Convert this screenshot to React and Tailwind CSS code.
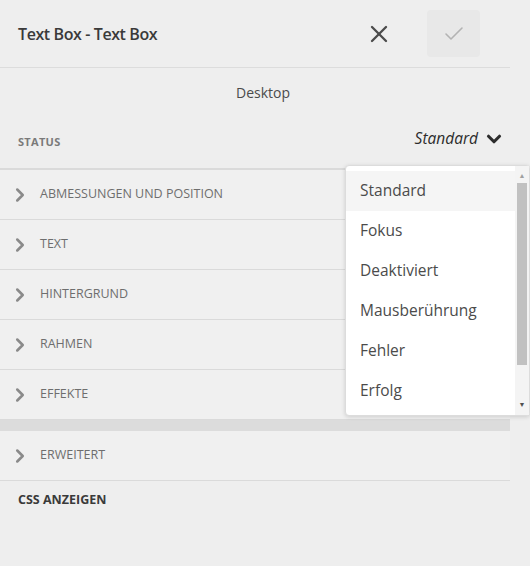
import { X, Check, ChevronRight, ChevronDown } from 'lucide-react'

const SECTIONS = ['Abmessungen und Position', 'Text', 'Hintergrund', 'Rahmen', 'Effekte']
const STATES = ['Standard', 'Fokus', 'Deaktiviert', 'Mausberührung', 'Fehler', 'Erfolg']

function SectionRow({ label }) {
  return (
    <div className="h-[50px] flex items-center border-b border-[#dadada] bg-[#f0f0f0] pl-[9px]">
      <ChevronRight size={22} strokeWidth={2.8} className="text-[#8a8a8a]" />
      <span className="ml-[9px] text-[12.5px] uppercase text-[#6e6e6e]">{label}</span>
    </div>
  )
}

export default function App() {
  return (
    <div className="relative w-[530px] h-[566px] bg-[#eeeeee] overflow-hidden font-['Open_Sans',sans-serif] text-[#323232]">
      <div className="w-[510px]">
        {/* Header */}
        <div className="h-[68px] flex items-center border-b border-[#dcdcdc] pl-[18px] pr-[30px]">
          <h2 className="flex-1 text-[16px] font-semibold tracking-[-0.4px] text-[#3a3a3a]">Text Box - Text Box</h2>
          <button className="w-[48px] h-[48px] flex items-center justify-center text-[#4b4b4b] mr-[24px]">
            <X size={28} strokeWidth={2} />
          </button>
          <button className="w-[53px] h-[47px] rounded-[4px] bg-[#e8e8e8] flex items-center justify-center text-[#b3b3b3]">
            <Check size={24} strokeWidth={1.6} />
          </button>
        </div>

        <div className="h-[48px] flex items-center justify-center pl-[16px] text-[14px] text-[#4b4b4b]">Desktop</div>

        {/* Status */}
        <div className="h-[54px] flex items-center justify-between border-b-2 border-[#dadada] pl-[18px] pr-[5px]">
          <span className="text-[11px] font-bold tracking-[0.3px] text-[#7a7a7a]">STATUS</span>
          <div className="flex items-center gap-[5px] -mt-[7px]">
            <span className="text-[15.5px] italic text-[#2c2c2c]">Standard</span>
            <ChevronDown size={22} strokeWidth={3.4} className="text-[#2c2c2c]" />
          </div>
        </div>

        {SECTIONS.map(s => <SectionRow key={s} label={s} />)}

        <div className="h-[11px] bg-[#dcdcdc]" />

        <SectionRow label="Erweitert" />

        <div className="pl-[18px] pt-[10px] text-[12.5px] font-bold text-[#3a3a3a]">CSS ANZEIGEN</div>
      </div>

      {/* Dropdown */}
      <div className="absolute left-[345px] top-[165px] w-[185px] h-[251px] bg-white rounded-[4px] border border-[#dcdcdc] shadow-[0_1px_4px_rgba(0,0,0,0.15)] flex">
        <ul className="flex-1 pt-[5px]">
          {STATES.map((s, i) => (
            <li
              key={s}
              className={`h-[40px] flex items-center pl-[14px] text-[15.5px] text-[#4b4b4b] ${i === 0 ? 'bg-[#f5f5f5]' : ''}`}
            >
              {s}
            </li>
          ))}
        </ul>
        <div className="w-[14px] flex flex-col items-center py-[5px] bg-[#f4f4f4]">
          <div className="text-[7px] leading-[10px] text-[#a0a0a0]">▲</div>
          <div className="w-[10px] h-[182px] mt-[2px] bg-[#c1c1c1]" />
          <div className="flex-1" />
          <div className="text-[7px] leading-[10px] text-[#505050]">▼</div>
        </div>
      </div>
    </div>
  )
}
